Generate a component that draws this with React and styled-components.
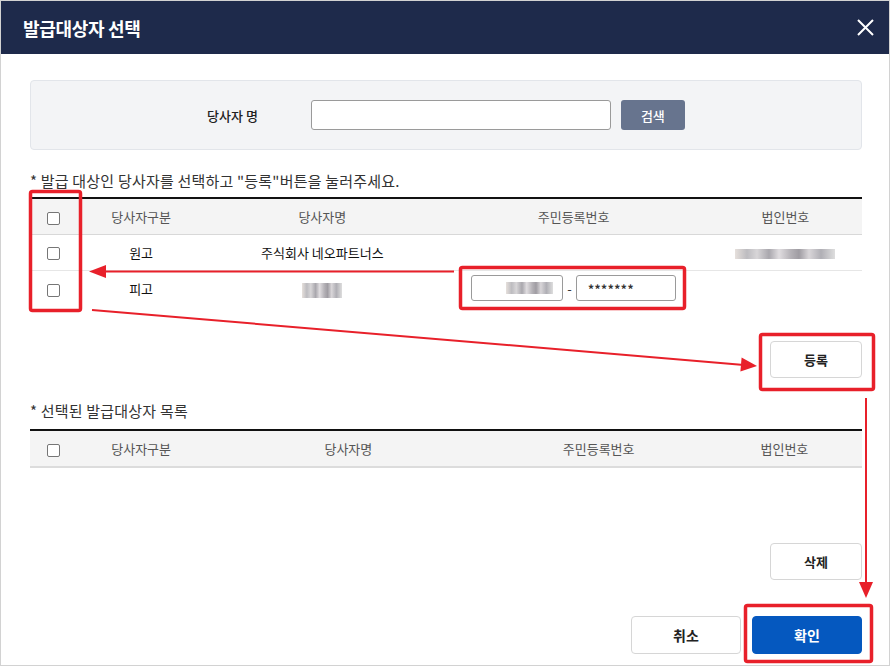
import React from 'react';
import styled, { createGlobalStyle } from 'styled-components';

const GlobalStyle = createGlobalStyle`
  body {
    margin: 0;
    background: #fff;
    font-family: "Noto Sans CJK KR", "Noto Sans", sans-serif;
  }
  * { box-sizing: border-box; }
`;

const partiesCols = [46, 130, 232, 270, 153];
const selectedCols = [46, 130, 284, 216, 155];

const App = () => {
  return (
    <>
      <GlobalStyle />
      <Frame>
        <Header>
          <Title>발급대상자 선택</Title>
          <Close aria-label="close">
            <svg width="17" height="17" viewBox="0 0 17 17">
              <path d="M1 1L16 16M16 1L1 16" stroke="#fff" strokeWidth="2" />
            </svg>
          </Close>
        </Header>

        <Body>
          <SearchBox>
            <SearchLabel>당사자 명</SearchLabel>
            <SearchInput type="text" />
            <SearchButton>검색</SearchButton>
          </SearchBox>

          <Guide $top={20} $bottom={5}>
            * 발급 대상인 당사자를 선택하고 "등록"버튼을 눌러주세요.
          </Guide>

          <Grid>
            <colgroup>
              {partiesCols.map((w, i) => (
                <col key={i} style={{ width: w }} />
              ))}
            </colgroup>
            <thead>
              <tr>
                <Th><Check /></Th>
                <Th>당사자구분</Th>
                <Th>당사자명</Th>
                <Th>주민등록번호</Th>
                <Th>법인번호</Th>
              </tr>
            </thead>
            <tbody>
              <Row>
                <Td><Check /></Td>
                <Td>원고</Td>
                <Td>주식회사 네오파트너스</Td>
                <Td></Td>
                <Td><Masked $w={100} $h={10} /></Td>
              </Row>
              <Row $last>
                <Td><Check /></Td>
                <Td>피고</Td>
                <Td><Masked $w={40} $h={15} /></Td>
                <Td>
                  <IdGroup>
                    <IdBox $w={92} $align="right">
                      <Masked $w={47} $h={12} />
                    </IdBox>
                    <Dash>-</Dash>
                    <IdBox $w={100} $align="left">*******</IdBox>
                  </IdGroup>
                </Td>
                <Td></Td>
              </Row>
            </tbody>
          </Grid>

          <ActionRow $top={35}>
            <PlainButton>등록</PlainButton>
          </ActionRow>

          <Guide $top={22} $bottom={7}>* 선택된 발급대상자 목록</Guide>

          <Grid $thickBottom>
            <colgroup>
              {selectedCols.map((w, i) => (
                <col key={i} style={{ width: w }} />
              ))}
            </colgroup>
            <thead>
              <tr>
                <Th $h={37}><Check /></Th>
                <Th $h={37}>당사자구분</Th>
                <Th $h={37}>당사자명</Th>
                <Th $h={37}>주민등록번호</Th>
                <Th $h={37}>법인번호</Th>
              </tr>
            </thead>
          </Grid>

          <ActionRow $top={75}>
            <PlainButton>삭제</PlainButton>
          </ActionRow>

          <ActionRow $top={36}>
            <FooterButton>취소</FooterButton>
            <FooterButton $primary>확인</FooterButton>
          </ActionRow>
        </Body>

        {/* annotation overlay */}
        <Marks width="890" height="666" viewBox="0 0 890 666">
          <g fill="none" stroke="#e8202a" strokeWidth="3.5">
            <rect x="30.5" y="191.5" width="50" height="119" rx="2" />
            <rect x="460.5" y="267.5" width="224" height="41" rx="2" />
            <rect x="760.5" y="334.5" width="113" height="55" rx="2" />
            <rect x="745.5" y="605.5" width="126" height="56" rx="2" />
          </g>
          <g stroke="#e8202a" strokeWidth="2" fill="#e8202a">
            <line x1="454" y1="271.5" x2="102" y2="271.5" />
            <polygon points="89,271.5 106,265 106,278" strokeWidth="0" />
            <line x1="92" y1="310" x2="744" y2="365" />
            <polygon points="757,366 741.6,357.6 740.4,371.6" strokeWidth="0" />
            <line x1="866" y1="398" x2="866" y2="585" />
            <polygon points="866,598 859,582 873,582" strokeWidth="0" />
          </g>
        </Marks>
      </Frame>
    </>
  );
};

const Frame = styled.div`
  position: relative;
  width: 890px;
  height: 666px;
  border: 1px solid #d2d2d2;
  background: #fff;
  display: flex;
  flex-direction: column;
`;

const Header = styled.div`
  height: 53px;
  flex-shrink: 0;
  background: #1e2a4b;
  display: flex;
  align-items: center;
  justify-content: space-between;
  padding: 0 15px 0 22px;
`;

const Title = styled.h1`
  margin: 0;
  color: #fff;
  font-size: 18px;
  font-weight: 700;
  letter-spacing: -0.3px;
`;

const Close = styled.button`
  background: none;
  border: 0;
  padding: 0;
  display: flex;
  cursor: pointer;
`;

const Body = styled.div`
  flex-shrink: 0;
  display: flex;
  flex-direction: column;
  padding: 0 27px 0 29px;
`;

const SearchBox = styled.div`
  margin-top: 26px;
  height: 70px;
  flex-shrink: 0;
  background: #f3f4f6;
  border: 1px solid #e2e5ea;
  border-radius: 4px;
  display: flex;
  align-items: center;
  justify-content: center;
`;

const SearchLabel = styled.span`
  font-size: 13px;
  font-weight: 500;
  color: #222;
  margin-right: 53px;
`;

const SearchInput = styled.input`
  width: 300px;
  height: 30px;
  border: 1px solid #9a9a9a;
  border-radius: 3px;
  background: #fff;
  margin-right: 10px;
`;

const SearchButton = styled.button`
  width: 64px;
  height: 30px;
  border: 0;
  border-radius: 3px;
  background: #67748e;
  color: #fff;
  font-family: inherit;
  font-size: 13px;
  font-weight: 500;
`;

const Guide = styled.p`
  margin: ${(p) => p.$top}px 0 ${(p) => p.$bottom}px;
  font-size: 15px;
  line-height: 22px;
  color: #333;
  letter-spacing: 0.2px;
`;

const Grid = styled.table`
  width: 100%;
  flex-shrink: 0;
  table-layout: fixed;
  border-collapse: collapse;
  border-top: 2px solid #111;
  border-bottom: ${(p) => (p.$thickBottom ? '2px solid #dcdcdc' : '0')};
`;

const Th = styled.th`
  height: ${(p) => p.$h || 36}px;
  padding: 0;
  background: #f4f4f4;
  border-bottom: 1px solid #d8d8d8;
  font-size: 13px;
  font-weight: 400;
  color: #555;
  text-align: center;
  vertical-align: middle;
`;

const Row = styled.tr`
  border-bottom: ${(p) => (p.$last ? '0' : '1px solid #e6e6e6')};
`;

const Td = styled.td`
  height: 36px;
  padding: 0;
  font-size: 13px;
  font-weight: 400;
  color: #111;
  text-align: center;
  vertical-align: middle;
`;

const Check = styled.span`
  display: inline-block;
  width: 13px;
  height: 13px;
  border: 1px solid #767676;
  border-radius: 2px;
  background: #fff;
  vertical-align: middle;
`;

const Masked = styled.span`
  display: inline-block;
  width: ${(p) => p.$w}px;
  height: ${(p) => p.$h}px;
  vertical-align: middle;
  background: linear-gradient(
    90deg,
    #e6e0dc 0%,
    #bdbcc0 12%,
    #d8d6d8 22%,
    #a9a7ad 34%,
    #e0dde0 44%,
    #b4b1b6 56%,
    #9f9ca2 64%,
    #d9d6d9 74%,
    #b0afb5 86%,
    #dedede 100%
  );
  filter: blur(0.7px);
`;

const IdGroup = styled.div`
  display: flex;
  align-items: center;
  justify-content: center;
  gap: 4px;
`;

const IdBox = styled.div`
  width: ${(p) => p.$w}px;
  height: 26px;
  border: 1px solid #9a9a9a;
  border-radius: 3px;
  display: flex;
  align-items: center;
  justify-content: ${(p) => (p.$align === 'right' ? 'flex-end' : 'flex-start')};
  padding: 0 9px 0 11px;
  font-size: 12px;
  font-weight: 700;
  color: #333;
  letter-spacing: 0.5px;
`;

const Dash = styled.span`
  font-size: 13px;
  color: #333;
`;

const ActionRow = styled.div`
  margin-top: ${(p) => p.$top}px;
  flex-shrink: 0;
  display: flex;
  justify-content: flex-end;
  gap: 11px;
`;

const PlainButton = styled.button`
  width: 92px;
  height: 37px;
  border: 1px solid #d6d6d6;
  border-radius: 4px;
  background: #fff;
  font-family: inherit;
  font-size: 13px;
  font-weight: 700;
  color: #222;
`;

const FooterButton = styled.button`
  width: 110px;
  height: 38px;
  border: 1px solid ${(p) => (p.$primary ? '#0558bf' : '#d6d6d6')};
  border-radius: 4px;
  background: ${(p) => (p.$primary ? '#0558bf' : '#fff')};
  color: ${(p) => (p.$primary ? '#fff' : '#222')};
  font-family: inherit;
  font-size: 14px;
  font-weight: 700;
`;

const Marks = styled.svg`
  position: absolute;
  left: -1px;
  top: -1px;
  pointer-events: none;
`;

export default App;
